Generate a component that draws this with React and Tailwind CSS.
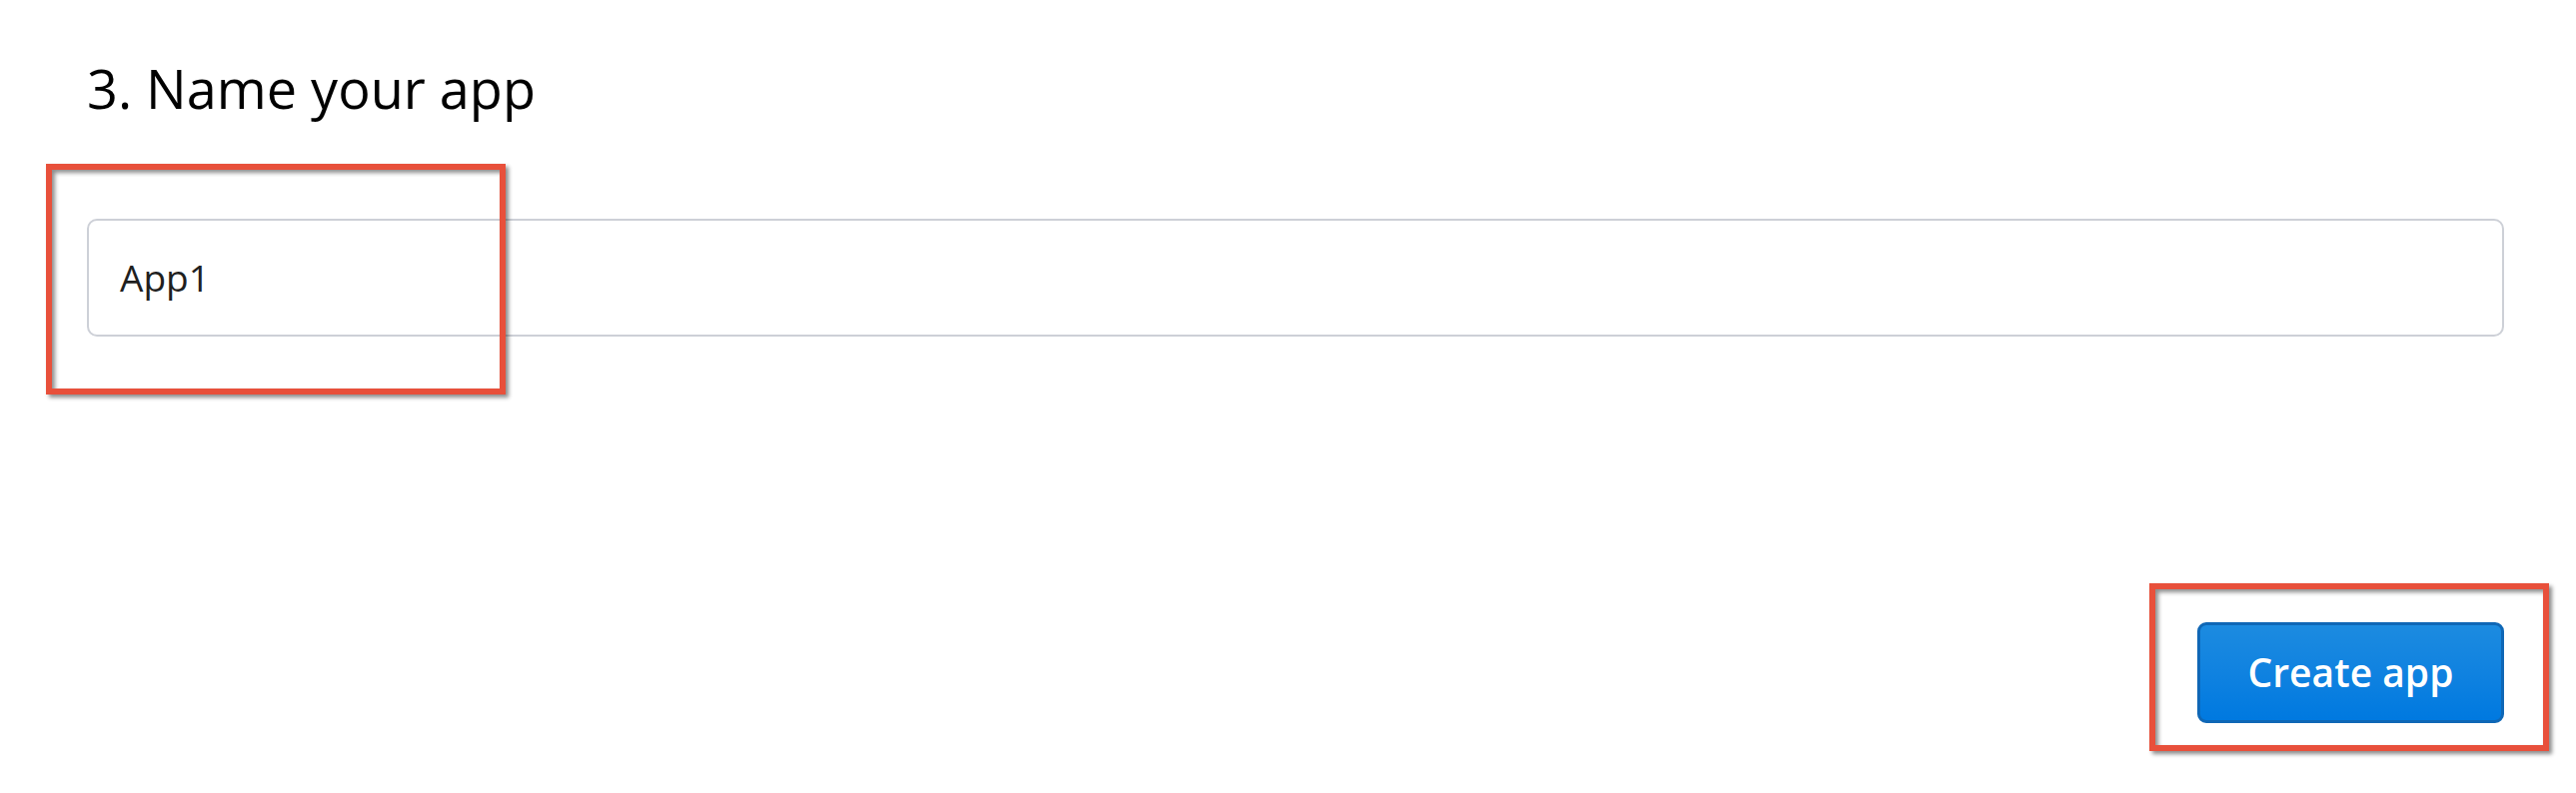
export default function App() {
  return (
    <div className="w-[2578px] h-[794px] bg-white overflow-hidden font-['Open_Sans',sans-serif] pl-[87px] pr-[72px] pt-[58px]">
      <h2 className="text-[54px] leading-[60px] text-black font-normal">3. Name your app</h2>
      <div className="mt-[101px] relative">
        <div className="h-[118px] border-2 border-[#cdd0d7] rounded-[10px] px-[31px] flex items-center text-[37px] text-[#1f1f1f]">
          App1
        </div>
        <div className="absolute left-[-41px] top-[-55px] w-[460px] h-[231px] border-[6px] border-[#e8503b] shadow-[3px_3px_4px_rgba(0,0,0,0.45),inset_3px_3px_4px_rgba(0,0,0,0.45)] pointer-events-none"></div>
      </div>
      <div className="mt-[286px] flex justify-end">
        <div className="relative">
          <button className="w-[307px] h-[101px] rounded-[9px] border-[3px] border-[#0f67b6] bg-gradient-to-b from-[#1c8be0] to-[#0079e0] text-white text-[39px] font-semibold flex items-center justify-center">
            Create app
          </button>
          <div className="absolute left-[-48px] top-[-39px] w-[400px] h-[168px] border-[6px] border-[#e8503b] shadow-[3px_3px_4px_rgba(0,0,0,0.45),inset_3px_3px_4px_rgba(0,0,0,0.45)] pointer-events-none"></div>
        </div>
      </div>
    </div>
  );
}
